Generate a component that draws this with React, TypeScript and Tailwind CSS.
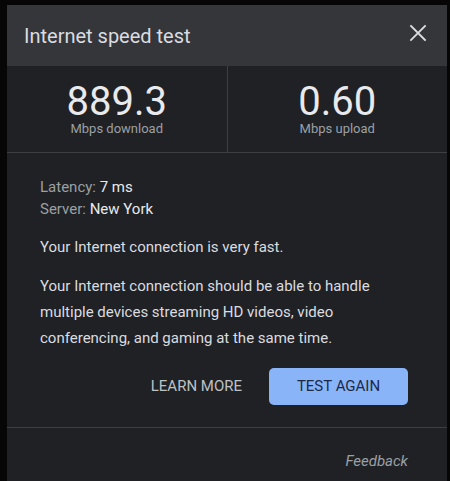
import React from "react";

export default function App() {
  return (
    <div className="w-[450px] h-[481px] bg-[#060606] pl-[7px] pr-[3px] pt-[5px] overflow-hidden" style={{ fontFamily: "Roboto, 'Liberation Sans', sans-serif" }}>
      <div className="w-[440px] h-[476px] bg-[#202124] flex flex-col">
        <div className="h-[61px] bg-[#35363a] flex items-center justify-between pl-[17px] pr-[20px]">
          <div className="text-[20px] text-[#dadce0]">Internet speed test</div>
          <svg width="18" height="18" viewBox="0 0 18 18" className="mb-[6px]">
            <path d="M2 2 L16 16 M16 2 L2 16" stroke="#dadce0" strokeWidth="1.8" strokeLinecap="square" />
          </svg>
        </div>
        <div className="h-[87px] flex border-b border-[#3c4043]">
          <div className="flex-1 flex flex-col items-center pt-[17px] border-r border-[#3c4043]">
            <div className="text-[40px] leading-[38px] text-[#e8eaed]">889.3</div>
            <div className="text-[13px] leading-[16px] text-[#9aa0a6]">Mbps download</div>
          </div>
          <div className="flex-1 flex flex-col items-center pt-[17px]">
            <div className="text-[40px] leading-[38px] text-[#e8eaed]">0.60</div>
            <div className="text-[13px] leading-[16px] text-[#9aa0a6]">Mbps upload</div>
          </div>
        </div>
        <div className="pl-[33px] pt-[23px] text-[15px] flex flex-col">
          <div className="leading-[22px] text-[#9aa0a6]">Latency: <span className="text-[#e8eaed]">7 ms</span></div>
          <div className="leading-[22px] text-[#9aa0a6]">Server: <span className="text-[#e8eaed]">New York</span></div>
          <div className="leading-[22px] text-[#dadce0] mt-[16px]">Your Internet connection is very fast.</div>
          <div className="w-[350px] leading-[26px] text-[#dadce0] mt-[15px]">
            Your Internet connection should be able to handle multiple devices streaming HD videos, video conferencing, and gaming at the same time.
          </div>
          <div className="flex justify-end items-center mt-[17px] pr-[39px] gap-[27px]">
            <div className="text-[15px] text-[#bdc1c6] uppercase">Learn more</div>
            <div className="w-[139px] h-[37px] rounded-[5px] bg-[#8ab4f8] flex items-center justify-center text-[15px] text-[#1c2a48] uppercase">Test again</div>
          </div>
        </div>
        <div className="mt-[22px] border-t border-[#3c4043] flex justify-end pr-[39px] pt-[22px]">
          <div className="italic text-[15px] text-[#9aa0a6]">Feedback</div>
        </div>
      </div>
    </div>
  );
}
